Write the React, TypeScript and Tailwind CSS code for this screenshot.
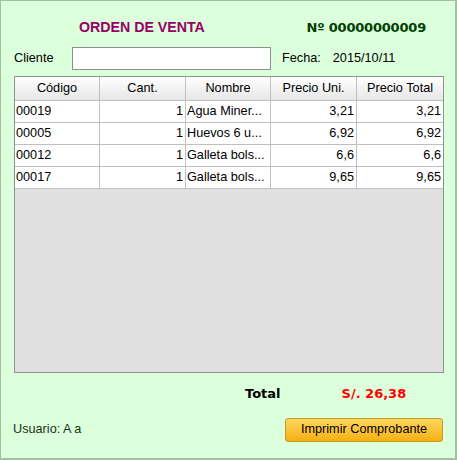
import React from 'react';

const rows = [
  { code: '00019', qty: '1', name: 'Agua Miner...', unit: '3,21', total: '3,21' },
  { code: '00005', qty: '1', name: 'Huevos 6 u...', unit: '6,92', total: '6,92' },
  { code: '00012', qty: '1', name: 'Galleta bols...', unit: '6,6', total: '6,6' },
  { code: '00017', qty: '1', name: 'Galleta bols...', unit: '9,65', total: '9,65' },
];

const headers = ['Código', 'Cant.', 'Nombre', 'Precio Uni.', 'Precio Total'];
const cols = 'grid grid-cols-[85px_86px_85px_86px_86px]';

export default function App() {
  return (
    <div className="w-[457px] h-[460px] box-border bg-[#dcffdc] border-t border-l border-r-2 border-b-2 border-[#a0c0a0] flex flex-col text-[12.7px] text-black font-['Liberation_Sans',sans-serif]">
      <div className="flex items-center h-[14px] mt-[20px]">
        <span className="ml-[78px] font-bold text-[14.2px] text-[#990066]">ORDEN DE VENTA</span>
        <span className="ml-auto mr-[29px] font-bold text-[13px] text-[#004000] tracking-[-0.2px] font-['DejaVu_Sans',sans-serif]">
          Nº 00000000009
        </span>
      </div>

      <div className="flex items-center mt-[12px] h-[23px]">
        <span className="ml-[13px] w-[58px]">Cliente</span>
        <input className="w-[199px] h-[23px] border border-[#909090] bg-white outline-none" />
        <span className="ml-[11px]">Fecha:</span>
        <span className="ml-[12px]">2015/10/11</span>
      </div>

      <div className="mt-[6px] ml-[13px] w-[430px] h-[297px] border border-[#909090] bg-[#e0e0e0] flex flex-col">
        <div className={`${cols} h-[24px]`}>
          {headers.map((h) => (
            <div
              key={h}
              className="border-r border-b border-[#c0c0c0] last:border-r-0 bg-gradient-to-b from-white to-[#e6e6e6] flex items-center justify-center"
            >
              {h}
            </div>
          ))}
        </div>
        {rows.map((r) => (
          <div key={r.code} className={`${cols} h-[22px] bg-white`}>
            <div className="border-r border-b border-[#c0c0c0] pl-[1px] flex items-center">{r.code}</div>
            <div className="border-r border-b border-[#c0c0c0] pr-[2px] flex items-center justify-end">{r.qty}</div>
            <div className="border-r border-b border-[#c0c0c0] pl-[1px] flex items-center whitespace-nowrap overflow-hidden">{r.name}</div>
            <div className="border-r border-b border-[#c0c0c0] pr-[2px] flex items-center justify-end">{r.unit}</div>
            <div className="border-b border-[#c0c0c0] pr-[2px] flex items-center justify-end">{r.total}</div>
          </div>
        ))}
      </div>

      <div className="flex items-center mt-[12px] h-[18px] font-['DejaVu_Sans',sans-serif] font-bold text-[13px]">
        <span className="ml-[244px]">Total</span>
        <span className="ml-[61px] text-[#ff0000]">S/. 26,38</span>
      </div>

      <div className="flex items-center mt-[15px]">
        <span className="ml-[12px] text-[#173317]">Usuario: A a</span>
        <button className="ml-auto mr-[12px] w-[158px] h-[24px] rounded-[3px] border border-[#c49a2c] bg-gradient-to-b from-[#ffd75a] to-[#f4b000] text-[12.7px] text-black">
          Imprimir Comprobante
        </button>
      </div>
    </div>
  );
}
